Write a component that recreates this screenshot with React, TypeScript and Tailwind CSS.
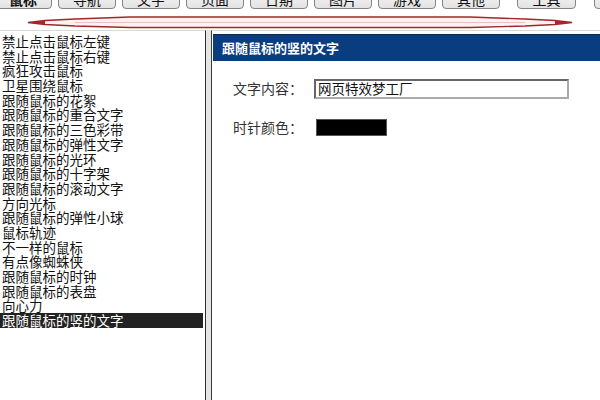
import React from "react";

const tabs = ["鼠标", "导航", "文字", "页面", "日期", "图片", "游戏", "其他"];

const effects = [
  "禁止点击鼠标左键",
  "禁止点击鼠标右键",
  "疯狂攻击鼠标",
  "卫星围绕鼠标",
  "跟随鼠标的花絮",
  "跟随鼠标的重合文字",
  "跟随鼠标的三色彩带",
  "跟随鼠标的弹性文字",
  "跟随鼠标的光环",
  "跟随鼠标的十字架",
  "跟随鼠标的滚动文字",
  "方向光标",
  "跟随鼠标的弹性小球",
  "鼠标轨迹",
  "不一样的鼠标",
  "有点像蜘蛛侠",
  "跟随鼠标的时钟",
  "跟随鼠标的表盘",
  "向心力",
  "跟随鼠标的竖的文字",
];

const font = { fontFamily: '"Noto Sans CJK SC", "Noto Sans", sans-serif' };

function Tab({ label, active, className = "" }: { label: string; active?: boolean; className?: string }) {
  return (
    <div
      className={`h-[20px] shrink-0 flex items-center justify-center rounded-[4px] border border-[#858585] bg-gradient-to-b from-[#fafafa] to-[#e2e2e2] text-[14px] text-[#111] ${
        active ? "font-bold" : ""
      } ${className}`}
    >
      {label}
    </div>
  );
}

// tapered red rule under the tab bar
function RedRule() {
  return (
    <svg width="600" height="20" viewBox="0 8 600 20" className="block">
      <polygon
        points="28,21.5 45,19.5 75,18 130,16 470,16 525,18 555,19.5 572,21.5 555,23.5 525,25 470,26.5 130,26.5 75,25 45,23.5"
        fill="#fdf2f2"
        stroke="#9e2a2a"
        strokeWidth="1.4"
      />
      <polyline points="75,21.5 525,21.5" stroke="#e9c3c3" strokeWidth="1" fill="none" />
      <polygon points="28,21.5 45,19.8 45,23.2" fill="#a82626" />
      <polygon points="572,21.5 555,19.8 555,23.2" fill="#a82626" />
    </svg>
  );
}

export default function App() {
  const selected = effects.length - 1;
  return (
    <div className="w-[600px] h-[400px] overflow-hidden bg-white flex flex-col" style={font}>
      {/* tab bar, cut off at the top */}
      <div className="flex gap-[6px] -mt-[11px] ml-[-6px] overflow-hidden">
        {tabs.map((t, i) => (
          <Tab key={t} label={t} active={i === 0} className="w-[58px]" />
        ))}
        <Tab label="工具" className="w-[59px] ml-[11px]" />
        <Tab label="帮助" className="w-[58px] ml-[12px]" />
      </div>

      <RedRule />

      <div className="flex flex-1 min-h-0 mt-[1px]">
        {/* effect list */}
        <div className="w-[206px] shrink-0 border-r border-[#2e2e2e] border-t border-t-[#d8d8d8] bg-white pt-[3px] pr-[2px]">
          {effects.map((e, i) => (
            <div
              key={e}
              className={`h-[14.7px] leading-[14.7px] text-[13.5px] pl-[2px] whitespace-nowrap ${
                i === selected ? "bg-[#222] text-white" : "text-[#111]"
              }`}
            >
              {e}
            </div>
          ))}
        </div>

        <div className="w-[5px] shrink-0 bg-[#e4e4e4]" />

        {/* settings panel */}
        <div className="flex-1 border-l border-[#3a3a3a] border-t border-t-[#d8d8d8] bg-white pl-[1px] pt-[3px]">
          <div className="h-[27px] bg-[#0a3d80] border-t border-[#062a5a] flex items-center pl-[9px] text-[13px] font-bold text-white">
            跟随鼠标的竖的文字
          </div>

          <div className="pl-[20px] pt-[17px] flex flex-col gap-[18px] text-[14px] text-[#333]">
            <div className="flex items-center">
              <span className="w-[81px] shrink-0">文字内容：</span>
              <div className="w-[255px] h-[20px] border-2 border-[#666] border-r-[#aaa] border-b-[#aaa] flex items-center pl-[2px] text-[13.5px] text-[#111]">
                网页特效梦工厂
              </div>
            </div>
            <div className="flex items-center">
              <span className="w-[83px] shrink-0">时针颜色：</span>
              <div className="w-[71px] h-[17px] bg-black border border-[#555]" />
            </div>
          </div>
        </div>
      </div>
    </div>
  );
}
